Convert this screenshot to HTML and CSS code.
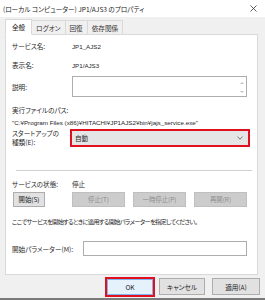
FILE: index.html
```html
<!DOCTYPE html>
<html lang="ja">
<head>
<meta charset="utf-8">
<link rel="stylesheet" href="styles.css">
</head>
<body>
<div class="window">
  <div class="titlebar">
    <span class="title">(ローカル コンピューター) JP1/AJS3 のプロパティ</span>
    <svg class="close" width="7" height="7" viewBox="0 0 7 7"><path d="M0.5 0.5 L6.5 6.5 M6.5 0.5 L0.5 6.5" stroke="#333" stroke-width="0.8" fill="none"/></svg>
  </div>
  <div class="tabs">
    <div class="tab active">全般</div>
    <div class="tab">ログオン</div>
    <div class="tab">回復</div>
    <div class="tab">依存関係</div>
  </div>
  <div class="panel">
    <div class="row r-name"><span class="label">サービス名:</span><span class="value">JP1_AJS2</span></div>
    <div class="row r-disp"><span class="label">表示名:</span><span class="value">JP1/AJS3</span></div>
    <div class="row r-desc"><span class="label">説明:</span>
      <div class="textarea">
        <div class="scroll"><span class="arr up"></span><span class="arr down"></span></div>
      </div>
    </div>
    <div class="row r-pathlabel"><span class="label wide">実行ファイルのパス:</span></div>
    <div class="row r-path"><span class="path">"C:¥Program Files (x86)¥HITACHI¥JP1AJS2¥bin¥jajs_service.exe"</span></div>
    <div class="row r-startup"><span class="label two">スタートアップの<br>種類(E):</span>
      <div class="combo"><span>自動</span>
        <svg class="chev" width="6" height="4" viewBox="0 0 6 4"><path d="M0.5 0.8 L3 3.2 L5.5 0.8" fill="none" stroke="#555" stroke-width="0.8"/></svg>
      </div>
    </div>
    <div class="divider"></div>
    <div class="row r-state"><span class="label">サービスの状態:</span><span class="jvalue">停止</span></div>
    <div class="btnrow">
      <button class="btn start">開始(S)</button>
      <button class="btn dis">停止(T)</button>
      <button class="btn dis">一時停止(P)</button>
      <button class="btn dis">再開(R)</button>
    </div>
    <div class="row r-hint"><span class="hint">ここでサービスを開始するときに適用する開始パラメーターを指定してください。</span></div>
    <div class="row r-param"><span class="label">開始パラメーター(M):</span><div class="input"></div></div>
  </div>
  <div class="footer">
    <button class="fbtn ok">OK</button>
    <button class="fbtn cancel">キャンセル</button>
    <button class="fbtn apply">適用(A)</button>
  </div>
</div>
</body>
</html>
```
FILE: styles.css
```css
* { box-sizing: border-box; }
html, body { margin: 0; padding: 0; }
body {
  width: 265px; height: 300px; overflow: hidden;
  font-family: "Noto Sans CJK JP", "Liberation Sans", sans-serif;
  font-feature-settings: "palt";
  font-size: 6.6px;
  color: #262626;
}
.window {
  width: 265px; height: 300px;
  background: #f0f0f0;
  display: flex; flex-direction: column;
  border-bottom: 2px solid #7a7a7a;
}
.titlebar {
  height: 17px; flex: none; background: #fff;
  display: flex; align-items: center; justify-content: space-between;
  padding: 0 8px 0 3px;
}
.title { font-size: 6.6px; color: #222; }
.tabs {
  height: 17px; flex: none; display: flex; align-items: flex-end;
  padding-left: 5px;
  position: relative; z-index: 1;
}
.tab {
  height: 14px; padding: 0 4px; display: flex; align-items: center;
  border: 1px solid #d9d9d9; border-bottom: none; margin-right: -1px;
  background: #f0f0f0; color: #333;
}
.tab.active { height: 16px; background: #fff; padding: 0 6px; border-bottom: 1px solid #fff; margin-bottom: -1px; color: #1a1a1a; }
.panel {
  margin: 0 7px 0 5px;
  height: 241px; flex: none;
  background: #fff;
  border: 1px solid #d9d9d9;
  padding: 0 0 0 6px;
  display: flex; flex-direction: column;
}
.row { display: flex; align-items: center; flex: none; }
.label { width: 60px; flex: none; }
.label.wide { width: auto; }
.value { font-family: "Liberation Sans", sans-serif; font-size: 6.2px; }
.jvalue { font-size: 6.6px; }
.r-name { margin-top: 5px; height: 12px; }
.r-disp { margin-top: 7px; height: 12px; }
.r-desc { margin-top: 5px; height: 21px; }
.textarea {
  width: 175px; height: 21px; border: 1px solid #adadad; position: relative;
}
.scroll { position: absolute; right: 0; top: 0; width: 8px; height: 19px; }
.arr { position: absolute; left: 2px; width: 0; height: 0; border-left: 2px solid transparent; border-right: 2px solid transparent; }
.arr.up { top: 5px; border-bottom: 2px solid #c4c4c4; }
.arr.down { top: 14px; border-top: 2px solid #c4c4c4; }
.r-pathlabel { margin-top: 7px; height: 12px; }
.r-path { height: 12px; }
.path { font-family: "Liberation Sans", sans-serif; font-size: 6.25px; }
.r-startup { margin-top: -1px; height: 22px; }
.label.two { line-height: 9px; }
.combo {
  width: 180px; height: 18px; margin-left: -2px;
  border: 2px solid #e01020; background: #e5e5e5;
  display: flex; align-items: center; justify-content: space-between;
  padding: 0 5px 0 3px;
}
.divider { margin: 21px 0 0 4px; width: 236px; height: 1px; background: #d0d0d0; flex: none; }
.r-state { margin-top: 7px; height: 12px; }
.btnrow { margin-top: 2px; display: flex; padding-left: 1px; flex: none; }
.btn {
  font: inherit; font-size: 6.4px;
  height: 15px; width: 53px; padding: 0; margin-right: 8px;
  background: #e1e1e1; border: 1px solid #adadad; color: #1a1a1a;
}
.btn.start { width: 32px; margin-right: 27px; }
.btn.dis { background: #cccccc; border-color: #bfbfbf; color: #8d8d8d; }
.r-hint { margin-top: 8px; height: 12px; }
.hint { font-size: 6.2px; letter-spacing: -0.65px; }
.r-param { margin-top: 14px; height: 15px; }
.r-param .label { width: 71px; }
.input { width: 164px; height: 15px; border: 1px solid #adadad; }
.footer {
  flex: 1; display: flex; justify-content: flex-end; align-items: center;
  padding-right: 5px;
}
.fbtn {
  font: inherit; font-size: 6.6px;
  width: 46px; height: 17px; padding: 0;
  background: #e1e1e1; border: 1px solid #adadad; color: #1a1a1a;
}
.fbtn.ok { width: 50px; height: 20px; margin-right: 4px; border: 2px solid #e01020; background: #e5f1fb; box-shadow: inset 0 0 0 1px #7eb4ea; }
.fbtn.cancel { margin-right: 7px; }
.fbtn.apply { width: 48px; }
```
